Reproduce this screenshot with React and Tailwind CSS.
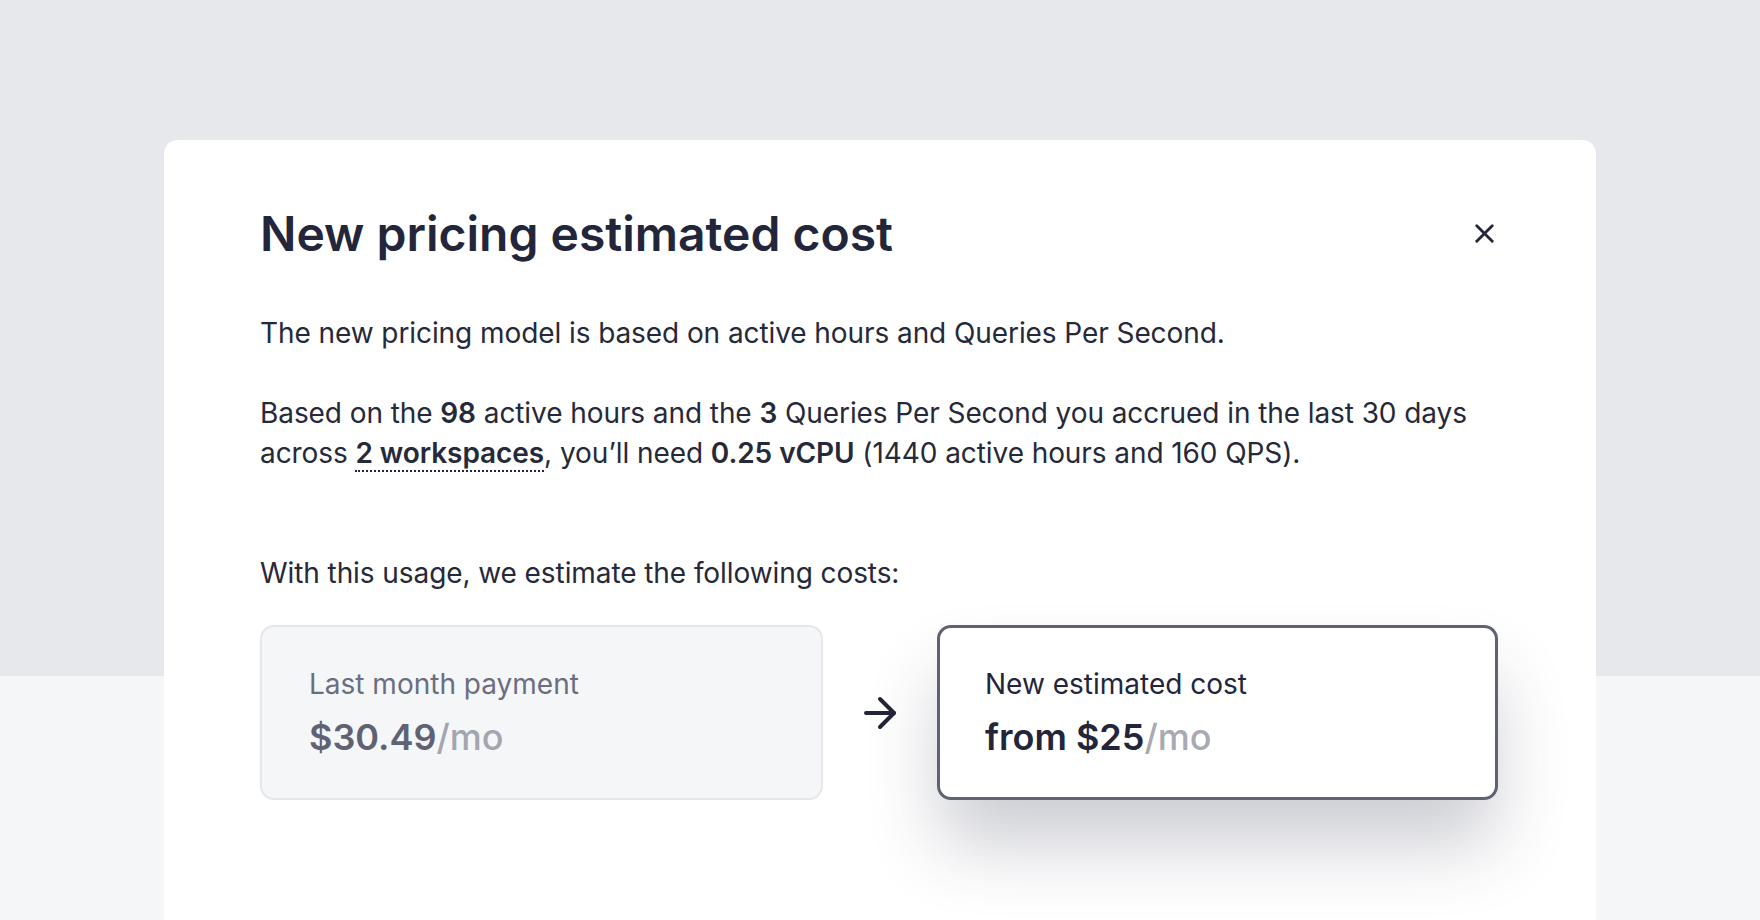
import { X, ArrowRight } from 'lucide-react';

export default function App() {
    return (
        <div className="h-[920px] w-full overflow-hidden bg-[linear-gradient(to_bottom,#e7e8ec_676px,#f5f6f8_676px)] font-['Inter',sans-serif] text-[#23263a]">
            <div className="ml-[164px] mt-[140px] w-[1432px] h-[800px] bg-white rounded-t-[14px] px-24 pt-[64px]">
                {/* Header */}
                <div className="flex items-center justify-between">
                    <h1 className="text-[48px] leading-[60px] font-semibold">New pricing estimated cost</h1>
                    <button className="-mt-[2px] text-[#23263a]">
                        <X size={31} strokeWidth={2.2} />
                    </button>
                </div>

                {/* Body */}
                <div className="mt-[49px] text-[28px] leading-[40px] tracking-[-0.08px] text-[#262939]">
                    <p>The new pricing model is based on active hours and Queries Per Second.</p>
                    <p className="mt-[40px]">
                        Based on the <b className="font-semibold">98</b> active hours and the <b className="font-semibold">3</b> Queries Per Second you accrued in the last 30 days
                        across <span className="font-semibold border-b-2 border-dotted border-[#23263a]">2 workspaces</span>, you’ll need <b className="font-semibold">0.25 vCPU</b> (1440 active hours and 160 QPS).
                    </p>
                    <p className="mt-[80px]">With this usage, we estimate the following costs:</p>
                </div>

                {/* Cost cards */}
                <div className="mt-[32px] flex items-center">
                    <div className="w-[563px] h-[175px] rounded-[14px] border-2 border-[#e6e7eb] bg-[#f5f6f8] pl-[47px] flex flex-col justify-center">
                        <div className="text-[28px] leading-[36px] text-[#6b6e80]">Last month payment</div>
                        <div className="mt-[13px] text-[36px] leading-[44px] font-semibold text-[#5f6275]">
                            $30.49<span className="font-medium text-[#a3a5b0]">/mo</span>
                        </div>
                    </div>
                    <div className="w-[114px] flex justify-center">
                        <ArrowRight size={48} strokeWidth={2} className="text-[#23263a]" />
                    </div>
                    <div className="w-[561px] h-[175px] rounded-[14px] border-[3px] border-[#5f6275] bg-white pl-[45px] flex flex-col justify-center shadow-[0_48px_72px_-4px_rgba(40,44,70,0.24)]">
                        <div className="text-[28px] leading-[36px] text-[#23263a]">New estimated cost</div>
                        <div className="mt-[13px] text-[36px] leading-[44px] font-semibold text-[#23263a]">
                            from $25<span className="font-medium text-[#a7a9b4]">/mo</span>
                        </div>
                    </div>
                </div>
            </div>
        </div>
    );
}
